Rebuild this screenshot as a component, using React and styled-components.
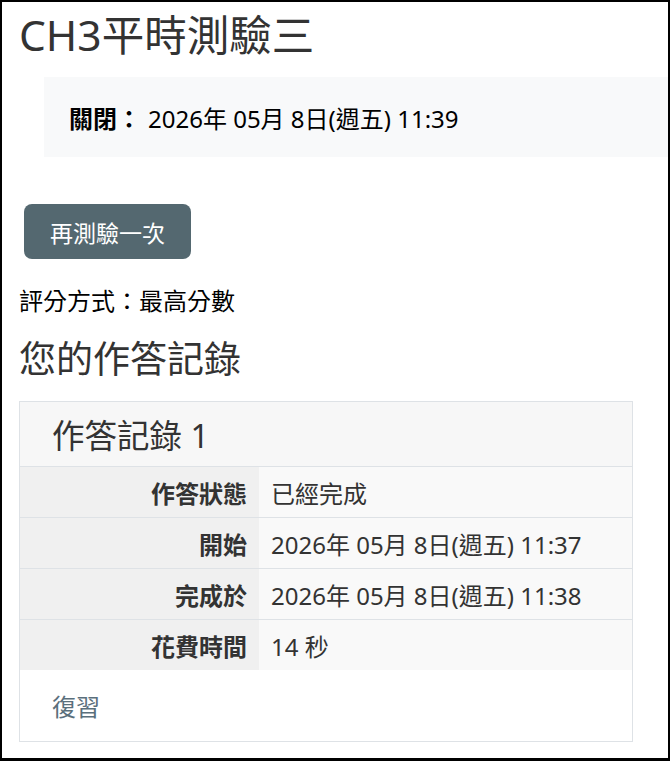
import styled, { createGlobalStyle } from 'styled-components'

const Global = createGlobalStyle`
  html, body {
    margin: 0;
    padding: 0;
    background: #fff;
  }
  body {
    font-family: "Noto Sans", "Noto Sans CJK TC", sans-serif;
    color: #1d2125;
  }
`

const Frame = styled.div`
  box-sizing: border-box;
  height: 761px;
  border: 2px solid #000;
  border-bottom-width: 3px;
  overflow: hidden;
  padding: 0 35px 0 17px;
`

const Title = styled.h2`
  margin: 0;
  padding-top: 5px;
  font-size: 42.5px;
  font-weight: 400;
  line-height: 56px;
  color: #333;
`

const CloseBox = styled.div`
  margin: 14px -40px 0 25px;
  height: 80px;
  background: #f8f9fa;
  display: flex;
  align-items: center;
  padding-left: 25px;
  gap: 7px;
  font-size: 24px;
  color: #000;
`

const Label = styled.span`
  font-weight: 700;
`

const RetryButton = styled.button`
  display: block;
  margin: 47px 0 0 5px;
  height: 55px;
  width: 167px;
  border: none;
  border-radius: 8px;
  background: #546870;
  color: #fff;
  font-family: inherit;
  font-size: 23px;
`

const Grading = styled.p`
  margin: 25px 0 0;
  font-size: 24px;
  line-height: 34px;
  color: #000;
`

const SectionTitle = styled.h3`
  margin: 16px 0 0;
  font-size: 37px;
  font-weight: 400;
  line-height: 50px;
  color: #333;
`

const Card = styled.div`
  margin-top: 17px;
  border: 1px solid #dee2e6;
`

const CardHeader = styled.div`
  height: 64px;
  background: #f7f7f7;
  display: flex;
  align-items: center;
  padding-left: 32px;
  font-size: 32.5px;
  color: #333;
  border-bottom: 1px solid #dee2e6;
`

const Row = styled.div`
  display: grid;
  grid-template-columns: 239px 1fr;
  height: 50px;
  font-size: 24px;
  color: #333;

  & + & {
    border-top: 1px solid #dee2e6;
  }
`

const Th = styled.div`
  background: #f0f0f0;
  font-weight: 700;
  padding-right: 12px;
  display: flex;
  align-items: center;
  justify-content: flex-end;
`

const Td = styled.div`
  background: #f9f9f9;
  padding-left: 12px;
  display: flex;
  align-items: center;
`

const Footer = styled.div`
  height: 71px;
  display: flex;
  align-items: center;
  padding-left: 32px;
  font-size: 24px;
`

const ReviewLink = styled.a`
  color: #5a6f7c;
  text-decoration: none;
`

const rows = [
  ['作答狀態', '已經完成'],
  ['開始', '2026年 05月 8日(週五) 11:37'],
  ['完成於', '2026年 05月 8日(週五) 11:38'],
  ['花費時間', '14 秒'],
]

export default function App() {
  return (
    <>
      <Global />
      <Frame>
        <Title>CH3平時測驗三</Title>
        <CloseBox>
          <Label>關閉：</Label>
          <span>2026年 05月 8日(週五) 11:39</span>
        </CloseBox>
        <RetryButton>再測驗一次</RetryButton>
        <Grading>評分方式：最高分數</Grading>
        <SectionTitle>您的作答記錄</SectionTitle>
        <Card>
          <CardHeader>作答記錄 1</CardHeader>
          {rows.map(([k, v]) => (
            <Row key={k}>
              <Th>{k}</Th>
              <Td>{v}</Td>
            </Row>
          ))}
          <Footer>
            <ReviewLink href="#">復習</ReviewLink>
          </Footer>
        </Card>
      </Frame>
    </>
  )
}
